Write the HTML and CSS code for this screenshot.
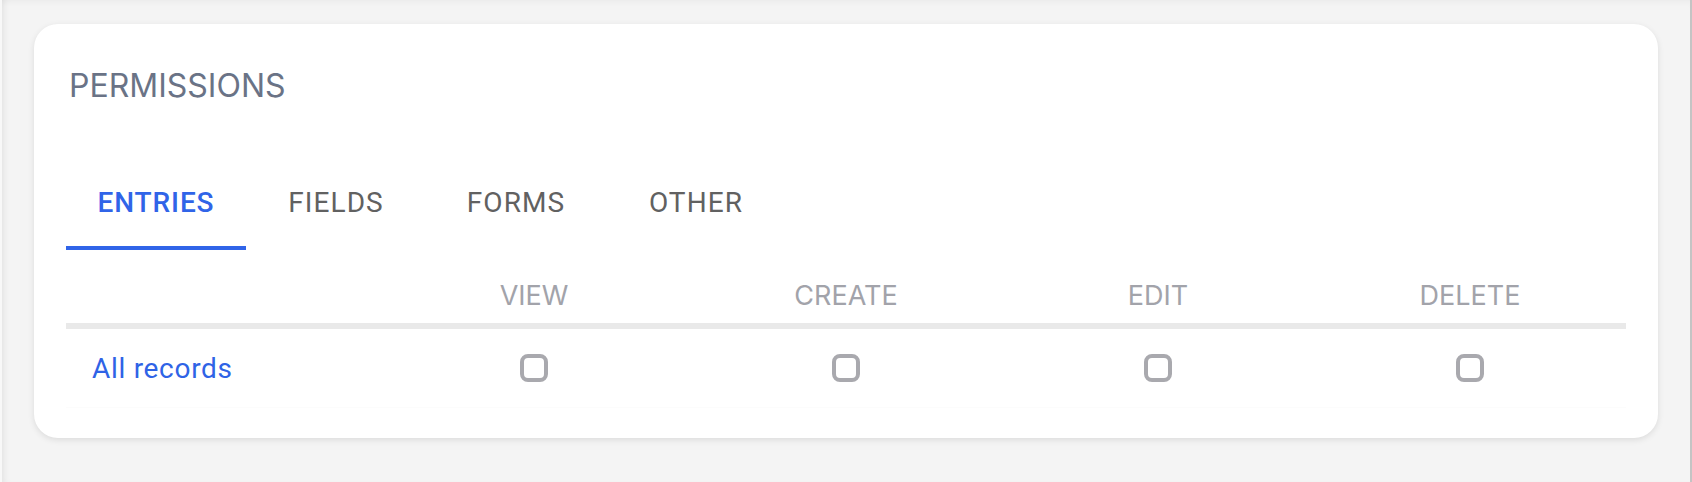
FILE: index.html
```html
<!DOCTYPE html>
<html lang="en">
<head>
<meta charset="utf-8">
<title>Permissions</title>
<link rel="stylesheet" href="styles.css">
</head>
<body>
<div class="frame">
  <section class="card">
    <h2 class="title">PERMISSIONS</h2>
    <nav class="tabs">
      <div class="tab active">ENTRIES</div>
      <div class="tab">FIELDS</div>
      <div class="tab">FORMS</div>
      <div class="tab">OTHER</div>
    </nav>
    <div class="table">
      <div class="row head">
        <div class="cell label"></div>
        <div class="cell">VIEW</div>
        <div class="cell">CREATE</div>
        <div class="cell">EDIT</div>
        <div class="cell">DELETE</div>
      </div>
      <div class="row body">
        <div class="cell label">All records</div>
        <div class="cell"><span class="check"></span></div>
        <div class="cell"><span class="check"></span></div>
        <div class="cell"><span class="check"></span></div>
        <div class="cell"><span class="check"></span></div>
      </div>
    </div>
  </section>
</div>
</body>
</html>
```
FILE: styles.css
```css
html, body {
  margin: 0;
  padding: 0;
  background: #f4f4f4;
}

.frame {
  box-sizing: border-box;
  min-height: 482px;
  padding: 24px 32px 44px 32px;
  background: #f4f4f4;
  border-left: 2px solid #f8f8f8;
  border-right: 2px solid #c4c4c4;
  box-shadow: inset 6px 0 6px -4px rgba(0, 0, 0, 0.07),
              inset 0 6px 6px -4px rgba(0, 0, 0, 0.04);
}

.card {
  background: #ffffff;
  border-radius: 24px;
  box-shadow: 0 2px 6px rgba(0, 0, 0, 0.10);
  padding: 42px 32px 30px 32px;
}

.title {
  margin: 0 0 0 3px;
  font-family: Inter, "Liberation Sans", sans-serif;
  font-weight: 400;
  font-size: 32px;
  line-height: 40px;
  color: #6a7386;
}

.tabs {
  display: flex;
  margin-top: 48px;
}

.tab {
  position: relative;
  width: 180px;
  height: 96px;
  display: flex;
  align-items: center;
  justify-content: center;
  font-family: Roboto, "Liberation Sans", sans-serif;
  font-weight: 400;
  font-size: 28px;
  letter-spacing: 1.1px;
  color: #616161;
}

.tab.active {
  color: #3064e8;
  font-weight: 500;
  letter-spacing: 0.9px;
}

.tab.active::after {
  content: "";
  position: absolute;
  left: 0;
  right: 0;
  bottom: 0;
  height: 4px;
  background: #3064e8;
}

.row {
  display: grid;
  grid-template-columns: repeat(5, 1fr);
}

.row.head {
  border-bottom: 6px solid #e9e9e9;
}

.row.head .cell {
  padding: 29px 0 11px;
  font-family: Inter, "Liberation Sans", sans-serif;
  font-size: 27px;
  line-height: 33px;
  color: #a2a3aa;
  text-align: center;
}

.row.body {
  height: 78px;
  align-items: center;
  border-bottom: 1px solid #fcfcfc;
}

.row.body .cell {
  display: flex;
  justify-content: center;
  align-items: center;
}

.row.body .cell.label {
  justify-content: flex-start;
  padding-left: 26px;
  font-family: Roboto, "Liberation Sans", sans-serif;
  font-size: 28px;
  letter-spacing: 0.7px;
  color: #2f63e6;
}

.check {
  box-sizing: border-box;
  width: 28px;
  height: 28px;
  border: 4px solid #a9a9ae;
  border-radius: 8px;
  background: #ffffff;
}
```
